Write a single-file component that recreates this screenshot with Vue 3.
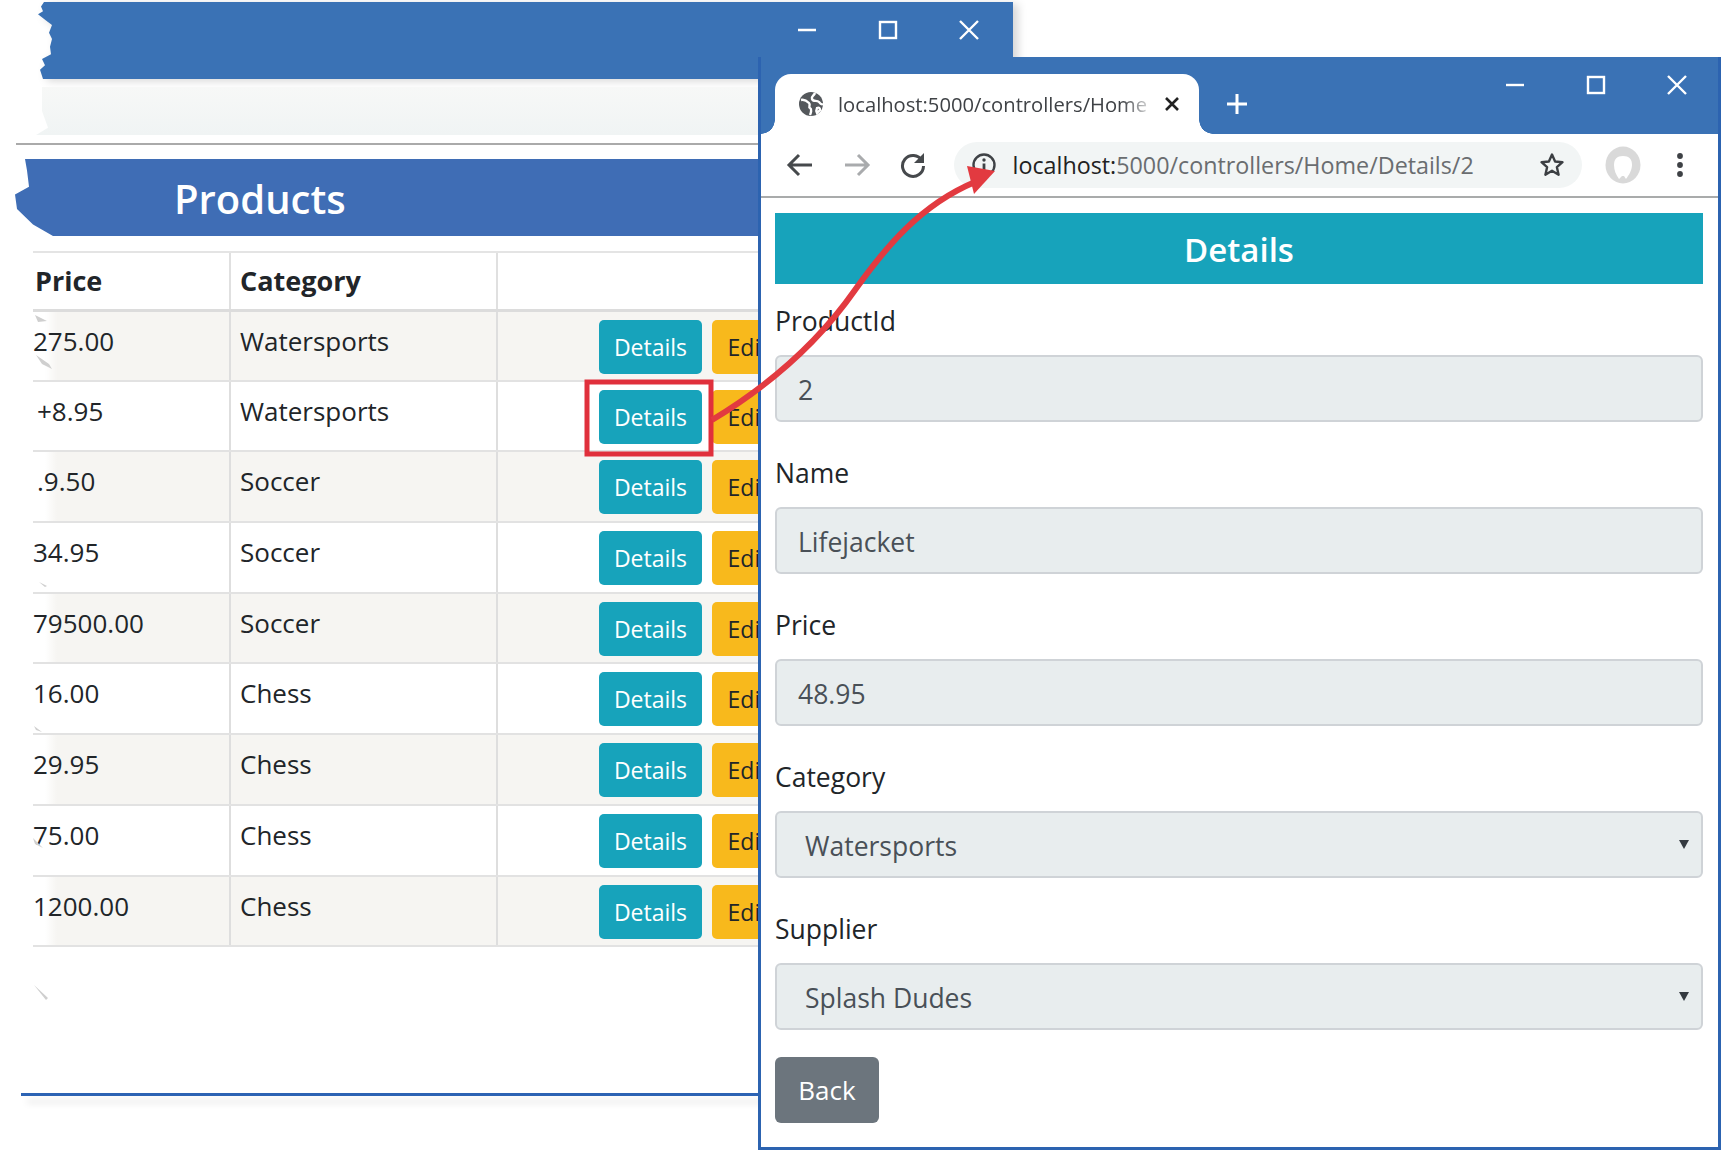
<script setup>
const rows = [
  { price: '275.00', cat: 'Watersports' },
  { price: '+8.95', cat: 'Watersports', nudge: true },
  { price: '.9.50', cat: 'Soccer', nudge: true },
  { price: '34.95', cat: 'Soccer' },
  { price: '79500.00', cat: 'Soccer' },
  { price: '16.00', cat: 'Chess' },
  { price: '29.95', cat: 'Chess' },
  { price: '75.00', cat: 'Chess' },
  { price: '1200.00', cat: 'Chess' }
]
const fields = [
  { label: 'ProductId', value: '2' },
  { label: 'Name', value: 'Lifejacket' },
  { label: 'Price', value: '48.95' },
  { label: 'Category', value: 'Watersports', wide: true, select: true },
  { label: 'Supplier', value: 'Splash Dudes', wide: true, select: true }
]
</script>

<template>
  <div class="page">
    <section class="win-left">
      <div class="shadow-wrap">
        <div class="top-bar">
          <div class="ctl-group">
            <span class="ctl"><svg width="20" height="20" viewBox="0 0 20 20"><path d="M1 10h18" class="wctl"/></svg></span>
            <span class="ctl"><svg width="20" height="20" viewBox="0 0 20 20"><rect x="2" y="2" width="16" height="16" class="wctl"/></svg></span>
            <span class="ctl"><svg width="20" height="20" viewBox="0 0 20 20"><path d="M1 1l18 18M19 1L1 19" class="wctl"/></svg></span>
          </div>
        </div>
      </div>
      <div class="addr-strip"></div>
      <div class="divider"></div>
      <h1 class="products">Products</h1>
      <table class="tbl">
        <colgroup>
          <col class="c1" />
          <col class="c2" />
          <col />
        </colgroup>
        <thead>
          <tr>
            <th class="first">Price</th>
            <th>Category</th>
            <th></th>
          </tr>
        </thead>
        <tbody>
          <tr v-for="(r, i) in rows" :key="i" :class="{ odd: i % 2 === 0 }">
            <td class="first" :class="{ nudge: r.nudge }">{{ r.price }}</td>
            <td>{{ r.cat }}</td>
            <td class="acts">
              <div class="acts-in">
                <button class="btn teal">Details</button>
                <button class="btn yellow">Edit</button>
              </div>
            </td>
          </tr>
        </tbody>
      </table>
      <div class="bottom-line"></div>
    </section>

    <section class="win-right">
      <div class="strip">
        <div class="tab">
          <svg class="globe" width="26" height="26" viewBox="0 0 26 26">
            <circle cx="13" cy="13" r="12" fill="#54585c"/>
            <path d="M3 9c4-1 6 1 8 3s-1 4 1 5 1 5 0 7M17 2c-1 3-4 3-3 6s5 1 7 3 2 3 4 2M19 17c2-1 3 0 3 2l-3 3c-1-2-1-3 0-5z" fill="none" stroke="#fff" stroke-width="2.4"/>
          </svg>
          <span class="tab-title">localhost:5000/controllers/Home</span>
          <svg class="tab-x" width="16" height="16" viewBox="0 0 16 16"><path d="M2 2l12 12M14 2L2 14" stroke="#222" stroke-width="2.6" fill="none"/></svg>
        </div>
        <svg class="plus" width="24" height="24" viewBox="0 0 24 24"><path d="M12 2v20M2 12h20" stroke="#fff" stroke-width="3" fill="none"/></svg>
        <div class="ctl-group right">
          <span class="ctl"><svg width="20" height="20" viewBox="0 0 20 20"><path d="M1 10h18" class="wctl"/></svg></span>
          <span class="ctl"><svg width="20" height="20" viewBox="0 0 20 20"><rect x="2" y="2" width="16" height="16" class="wctl"/></svg></span>
          <span class="ctl"><svg width="20" height="20" viewBox="0 0 20 20"><path d="M1 1l18 18M19 1L1 19" class="wctl"/></svg></span>
        </div>
      </div>
      <div class="toolbar">
        <span class="tool"><svg width="28" height="28" viewBox="0 0 28 28"><path d="M26 14H3M13 4L3 14l10 10" fill="none" stroke="#46494c" stroke-width="3"/></svg></span>
        <span class="tool"><svg width="28" height="28" viewBox="0 0 28 28"><path d="M2 14h23M15 4l10 10-10 10" fill="none" stroke="#a9abad" stroke-width="3"/></svg></span>
        <span class="tool"><svg width="28" height="28" viewBox="0 0 28 28"><path d="M23 9.5A10.5 10.5 0 1 0 24.5 15" fill="none" stroke="#46494c" stroke-width="3"/><path d="M25 2v10H15z" fill="#46494c"/></svg></span>
        <div class="omni">
          <svg class="info" width="24" height="24" viewBox="0 0 24 24"><circle cx="12" cy="12" r="10.5" fill="none" stroke="#3f4246" stroke-width="2.4"/><path d="M12 10.5v7" stroke="#3f4246" stroke-width="2.8"/><circle cx="12" cy="7" r="1.7" fill="#3f4246"/></svg>
          <span class="url"><b>localhost:</b>5000/controllers/Home/Details/2</span>
          <svg class="star" width="26" height="26" viewBox="0 0 26 26"><path d="M13 2.5l3.1 7 7.4.7-5.6 5 1.7 7.5L13 18.8l-6.6 3.9 1.7-7.5-5.6-5 7.4-.7z" fill="none" stroke="#3c3f43" stroke-width="2.4" stroke-linejoin="round"/></svg>
        </div>
        <span class="tool small">
          <svg width="36" height="38" viewBox="0 0 36 38"><ellipse cx="18" cy="19" rx="17.5" ry="18.5" fill="#d9d9d9"/><path d="M14 33c-3-4-5-9-5-14 0-6 3-9 9-9s9 3 9 9c0 5-3 10-6 14l-2-3-2 0z" fill="#fff"/></svg>
        </span>
        <span class="tool small">
          <svg width="8" height="26" viewBox="0 0 8 26"><circle cx="4" cy="4" r="2.9" fill="#3e4145"/><circle cx="4" cy="13" r="2.9" fill="#3e4145"/><circle cx="4" cy="22" r="2.9" fill="#3e4145"/></svg>
        </span>
      </div>
      <div class="body">
        <h2 class="hdr">Details</h2>
        <div v-for="f in fields" :key="f.label" class="field">
          <label class="lbl">{{ f.label }}</label>
          <div class="ctrl" :class="{ wide: f.wide }">
            <span>{{ f.value }}</span>
            <svg v-if="f.select" class="caret" width="12" height="12" viewBox="0 0 12 12"><path d="M1 2h10L6 11z" fill="#343a40"/></svg>
          </div>
        </div>
        <button class="back">Back</button>
      </div>
    </section>

    <svg class="notes" width="1725" height="1154" viewBox="0 0 1725 1154">
      <path d="M35 315l12 6-9 1zM36 355l13 9 3 5-10-5zM39 582l8 4-2 1zM34 985l14 13-2 2zM34 726l8 6-6-2zM33 838l10 10-8-4z" fill="#cfcfcf"/>
      <rect x="587" y="382" width="124" height="72" fill="none" stroke="#e0303c" stroke-width="5"/>
      <path d="M712 420C770 385 820 340 855 290C885 248 920 205 975 182" fill="none" stroke="#e23a40" stroke-width="6"/>
      <path d="M995 171L967 166L974 194z" fill="#e23a40"/>
    </svg>
  </div>
</template>

<style scoped>
.page {
  position: relative;
  width: 1725px;
  height: 1154px;
  overflow: hidden;
  background: #fff;
  font-family: "Open Sans", "Noto Sans", sans-serif;
  color: #212529;
}
.wctl { fill: none; stroke: #fff; stroke-width: 2.4; }

.win-left {
  position: absolute;
  left: 0;
  top: 2px;
  width: 1013px;
  height: 1110px;
  display: flex;
  flex-direction: column;
}
.shadow-wrap { filter: drop-shadow(5px 2px 4px rgba(0, 0, 0, .16)); }
.top-bar {
  margin-left: 38px;
  height: 77px;
  background: #3a72b5;
  display: flex;
  justify-content: flex-end;
  clip-path: polygon(6px 0, 100% 0, 100% 100%, 5px 100%, 2px 88%, 7px 82%, 4px 74%, 13px 68%, 12px 58%, 14px 48%, 11px 40%, 14px 30%, 8px 24%, 0 16%, 5px 12%, 3px 6%);
}
.ctl-group { display: flex; height: 56px; margin-right: 4px; }
.ctl { width: 81px; display: flex; align-items: center; justify-content: center; }
.addr-strip {
  margin: 8px 0 0 36px;
  width: 724px;
  height: 48px;
  background: linear-gradient(#f7f8f7, #f0f4f4);
  clip-path: polygon(6px 0, 100% 0, 100% 100%, 0 100%, 12px 85%, 6px 50%);
}
.divider { margin: 8px 0 0 16px; width: 744px; height: 2px; background: #aaa; }
.products {
  margin: 14px 0 0 15px;
  width: 745px;
  height: 77px;
  line-height: 79px;
  padding-left: 159px;
  box-sizing: border-box;
  background: #3f6db5;
  color: #fff;
  font-size: 40px;
  font-weight: 600;
  clip-path: polygon(10px 0, 100% 0, 100% 100%, 38px 100%, 18px 85%, 2px 65%, 0 46%, 14px 36%, 12px 15%);
}
.tbl {
  margin: 15px 0 0 33px;
  width: 727px;
  border-collapse: collapse;
  table-layout: fixed;
  font-size: 26px;
}
.c1 { width: 197px; }
.c2 { width: 267px; }
.tbl th {
  height: 58px;
  padding: 0 0 0 9px;
  text-align: left;
  font-weight: 700;
  font-size: 27px;
  border-top: 2px solid #e4e4e4;
  border-bottom: 3px solid #dcdcdc;
  border-left: 2px solid #e0e0e0;
  box-sizing: border-box;
}
.tbl td {
  height: 70.7px;
  padding: 11px 0 0 9px;
  vertical-align: top;
  line-height: 36px;
  border-bottom: 2px solid #e2e2e2;
  border-left: 2px solid #dedede;
  box-sizing: border-box;
}
.tbl .first { border-left: 0; padding-left: 0; position: relative; }
.tbl th.first { padding-left: 2px; }
.tbl .nudge { padding-left: 4px; }
.odd td { background: #f6f5f2; }
.odd .first {
  background: linear-gradient(90deg, #fff 0 12px, #f6f5f2 24px);
}
.tbl .acts { padding: 8px 0 0 101px; }
.acts-in { display: flex; gap: 10px; }
.btn {
  height: 54px;
  padding: 0;
  border: 0;
  border-radius: 5px;
  font: 400 23px "Open Sans", sans-serif;
  flex: none;
}
.teal { width: 103px; background: #17a3bb; color: #fff; }
.yellow { width: 72px; background: #f8b91c; color: #212529; }
.bottom-line {
  margin: 146px 0 0 21px;
  width: 739px;
  height: 3px;
  background: #2c63b4;
  box-shadow: 6px 7px 7px rgba(0, 0, 0, .12);
}

.win-right {
  position: absolute;
  left: 758px;
  top: 57px;
  width: 963px;
  height: 1093px;
  box-sizing: border-box;
  border: 3px solid #2c63b0;
  background: #fff;
}
.strip {
  height: 77px;
  background: #3a72b5;
  display: flex;
  align-items: flex-start;
  margin-top: -3px;
}
.tab {
  position: relative;
  margin: 17px 0 0 14px;
  width: 424px;
  height: 60px;
  box-sizing: border-box;
  padding-left: 23px;
  background: #fff;
  border-radius: 16px 16px 0 0;
  display: flex;
  align-items: center;
}
.tab::before, .tab::after {
  content: "";
  position: absolute;
  bottom: 0;
  width: 14px;
  height: 14px;
}
.tab::before { left: -14px; background: radial-gradient(circle at 0 0, transparent 13.5px, #fff 14px); }
.tab::after { right: -14px; background: radial-gradient(circle at 100% 0, transparent 13.5px, #fff 14px); }
.globe { flex: none; }
.tab-title {
  margin-left: 14px;
  white-space: nowrap;
  font-size: 20.2px;
  color: #3f4246;
  -webkit-mask-image: linear-gradient(90deg, #000 92%, rgba(0, 0, 0, .25) 100%);
  mask-image: linear-gradient(90deg, #000 92%, rgba(0, 0, 0, .25) 100%);
}
.tab-x { margin-left: auto; margin-right: 19px; flex: none; }
.plus { margin: 35px 0 0 26px; flex: none; }
.ctl-group.right { margin: 3px 1px 0 auto; height: 50px; }

.toolbar {
  height: 64px;
  box-sizing: border-box;
  border-bottom: 2px solid #a9abab;
  display: flex;
  align-items: center;
  padding-left: 11px;
}
.tool { width: 56.5px; flex: none; display: flex; justify-content: center; }
.tool.small { width: 46px; }
.tool.small:nth-last-child(2) { margin-left: 18px; }
.tool.small:last-child { margin-left: 11px; }
.omni {
  margin-left: 12px;
  width: 628px;
  height: 46px;
  flex: none;
  box-sizing: border-box;
  border-radius: 23px;
  background: #f2f5f5;
  display: flex;
  align-items: center;
  padding: 0 17px 0 18px;
}
.info { flex: none; }
.url { margin-left: 17px; font-size: 23.3px; color: #6a6d70; white-space: nowrap; }
.url b { font-weight: 400; color: #222; }
.star { margin-left: auto; flex: none; }

.body { padding: 15px 15px 0 14px; }
.hdr {
  margin: 0 0 2px;
  height: 71px;
  line-height: 73px;
  text-align: center;
  background: #17a3bb;
  color: #fff;
  font-size: 33px;
  font-weight: 600;
}
.field { padding-top: 16px; margin-bottom: 16px; }
.lbl { display: block; height: 39px; line-height: 39px; font-size: 26.5px; margin-bottom: 14px; }
.ctrl {
  position: relative;
  height: 67px;
  box-sizing: border-box;
  border: 2px solid #cfd3d7;
  border-radius: 6px;
  background: #e8edee;
  display: flex;
  align-items: center;
  padding: 2px 0 0 21px;
  font-size: 26.5px;
  color: #495057;
}
.ctrl.wide { padding-left: 28px; }
.caret { position: absolute; right: 11px; top: 25px; }
.back {
  display: block;
  margin-top: 27px;
  width: 104px;
  height: 66px;
  border: 0;
  border-radius: 6px;
  background: #6c757d;
  color: #fff;
  font: 400 26px "Open Sans", sans-serif;
}
.notes { position: absolute; left: 0; top: 0; pointer-events: none; }
</style>
